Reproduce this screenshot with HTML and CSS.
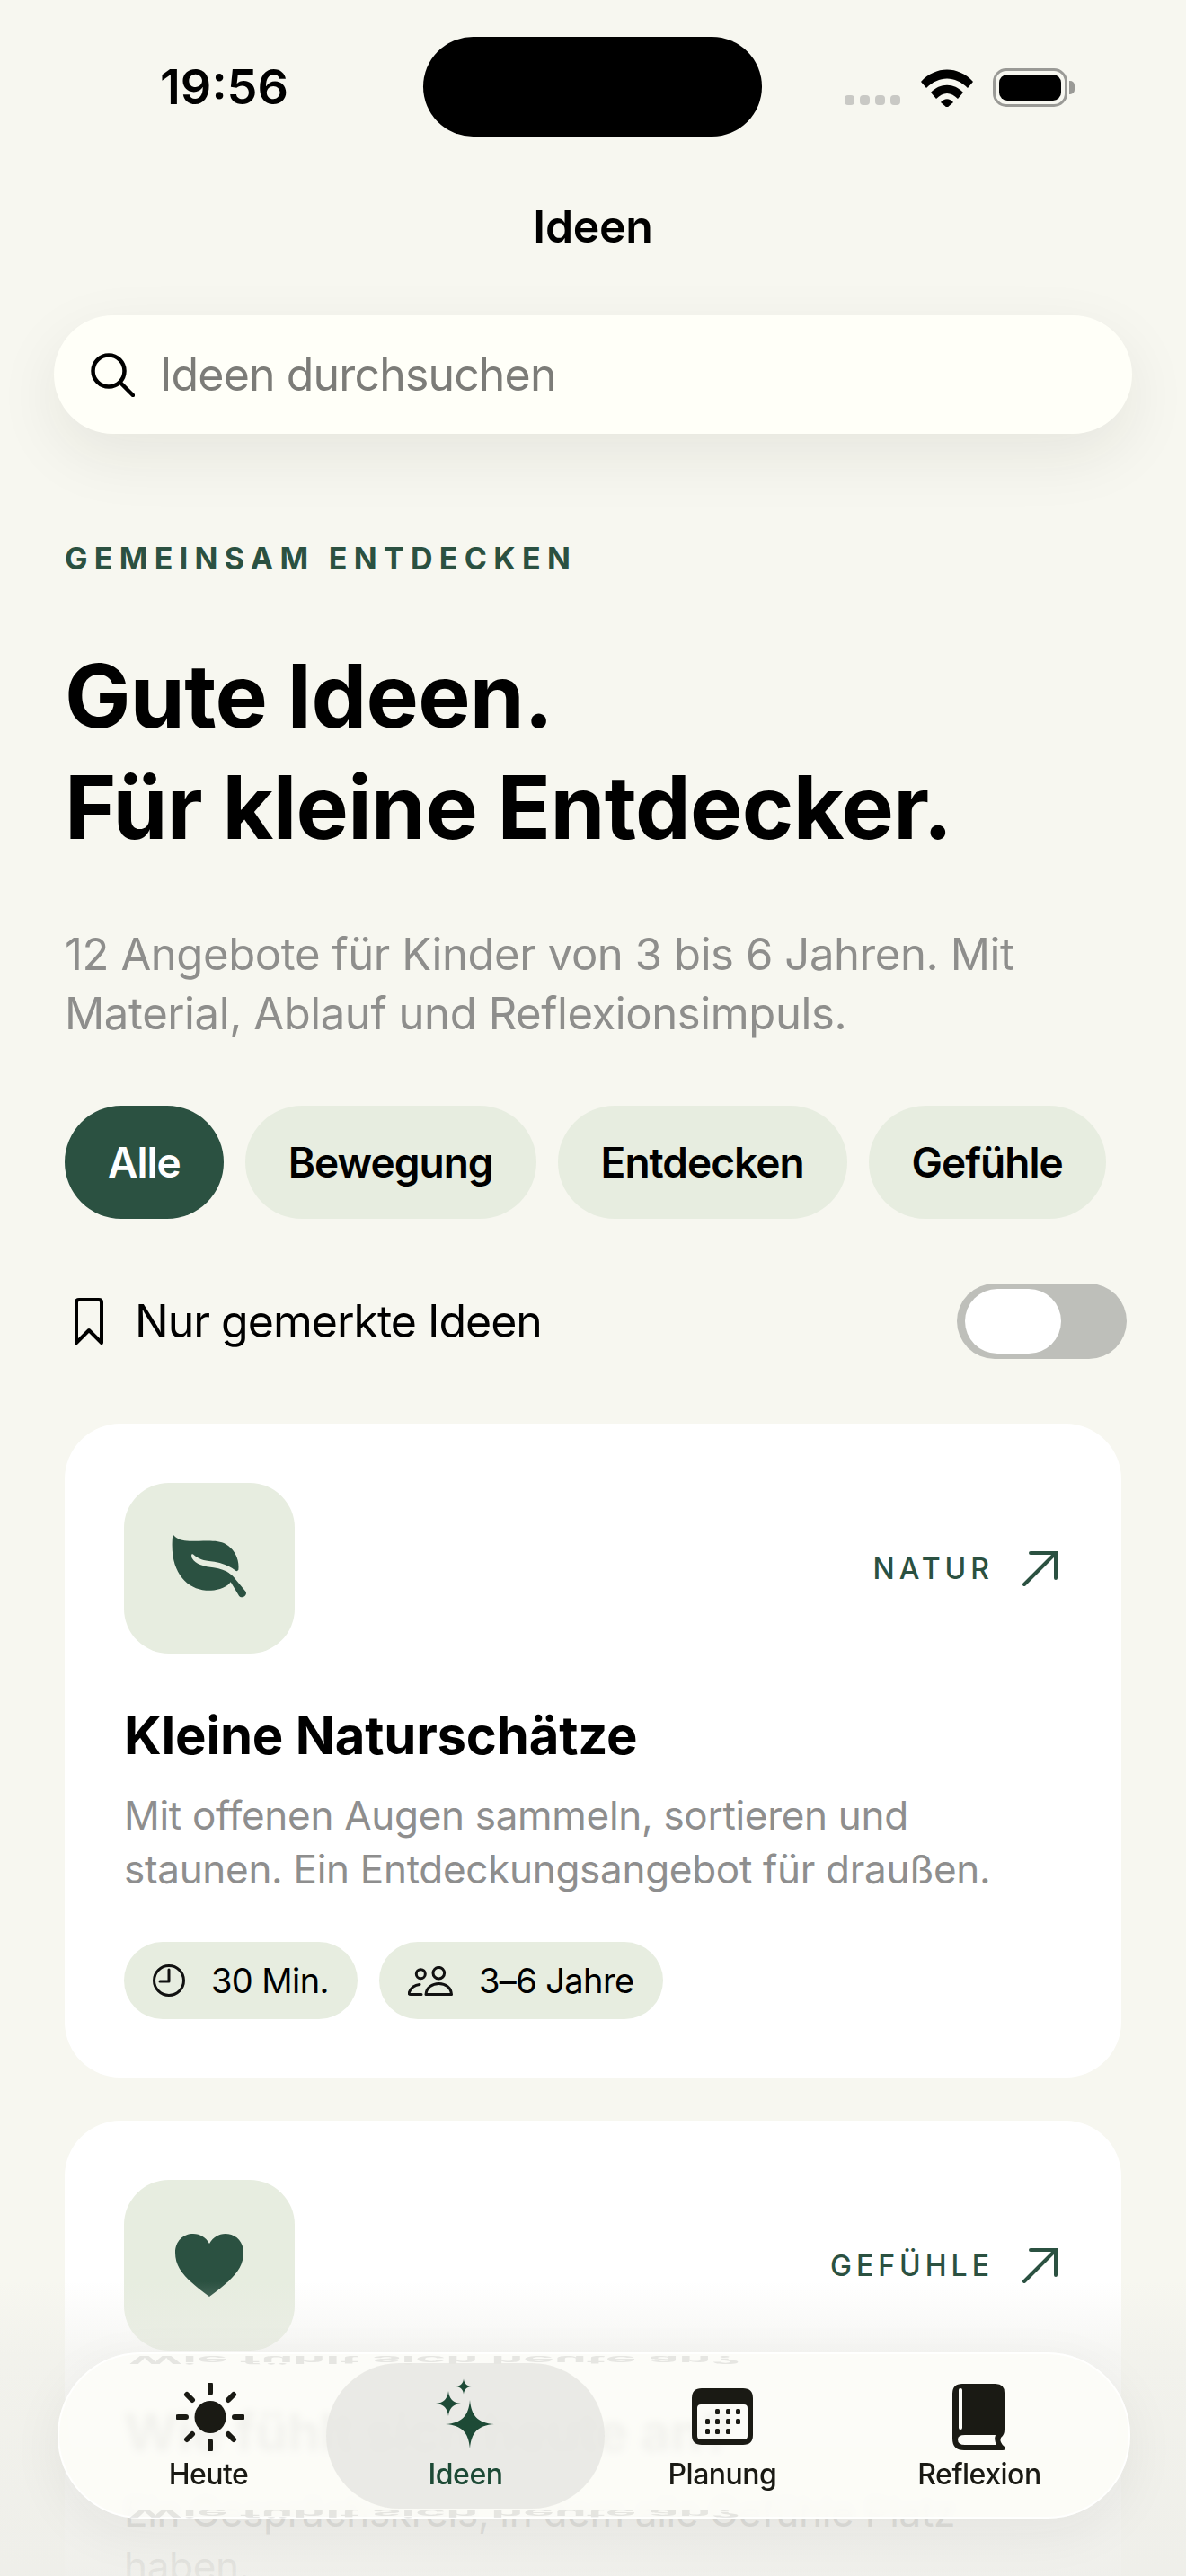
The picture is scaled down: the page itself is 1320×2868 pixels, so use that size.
FILE: index.html
```html
<!DOCTYPE html>
<html lang="de">

<head>
    <meta charset="UTF-8">
    <meta name="viewport" content="width=device-width, initial-scale=1.0">
    <title>Ideen</title>

    <link rel="stylesheet" href="styles.css">
</head>

<body>
    <div class="screen">
        <div class="status">
            <span class="status__time">19:56</span>
            <div class="status__island"></div>
            <div class="status__icons">
                <div class="status__signal"><i></i><i></i><i></i><i></i></div>
                <svg class="status__wifi" viewBox="0 0 58 42">
                    <path d="M0 14 C16 -4 42 -4 58 14 L52 21 C38 7 20 7 6 21 Z" />
                    <path d="M11 26 C21 15 37 15 47 26 L41 33 C33 25 25 25 17 33 Z" />
                    <path d="M22 37 C26 32 32 32 36 37 L29 43 Z" />
                </svg>
                <div class="status__battery"><div class="status__level"></div></div>
            </div>
        </div>

        <h2 class="nav-title">Ideen</h2>

        <div class="search">
            <svg class="search__icon" viewBox="0 0 49 49">
                <circle cx="20" cy="20" r="17.5" />
                <path d="M33 33 L47 47" />
            </svg>
            <span class="search__text">Ideen durchsuchen</span>
        </div>

        <main class="content">
            <p class="eyebrow">GEMEINSAM ENTDECKEN</p>
            <h1 class="hero">Gute Ideen.<br>Für kleine Entdecker.</h1>
            <p class="lead">12 Angebote für Kinder von 3 bis 6 Jahren. Mit<br>Material, Ablauf und Reflexionsimpuls.</p>

            <div class="filters">
                <span class="pill pill--active">Alle</span>
                <span class="pill">Bewegung</span>
                <span class="pill">Entdecken</span>
                <span class="pill">Gefühle</span>
            </div>

            <div class="saved">
                <svg class="saved__icon" viewBox="0 0 34 54">
                    <path d="M3 6 Q3 3 6 3 H28 Q31 3 31 6 V51 L17 37 L3 51 Z" />
                </svg>
                <span class="saved__label">Nur gemerkte Ideen</span>
                <div class="switch"><div class="switch__knob"></div></div>
            </div>

            <article class="card">
                <div class="card__top">
                    <div class="tile">
                        <svg class="tile__leaf" viewBox="-2 0 88 74">
                            <path class="leaf-body" d="M2.3 0.3 C6.7 5 11.7 6.7 20 6.7 C38 6.7 52 5 60 10 C70 15.7 75.7 26.7 74.3 39 Q73 40.5 71.7 40 C63 33 52 30 41.7 29 C33 28 28 25 24.3 21.7 C21.7 20 21.7 23 22.7 25.7 C26.7 33 36.7 35 46.7 36.3 C58 38 65.7 41.7 71.7 50 L82.7 63.3 C84.3 67.7 78 71.7 75 67.7 L65.7 52.3 C60 60 46.7 62.3 38.3 61.7 C16.7 60 -1 41.7 0.7 6.7 C0.7 2.3 1.7 0.3 2.3 0.3 Z" />
                        </svg>
                    </div>
                    <div class="tag">
                        <span class="tag__text">NATUR</span>
                        <svg class="tag__arrow" viewBox="0 0 40 40">
                            <path d="M2 38 L37 3 M9 3 H37 V31" />
                        </svg>
                    </div>
                </div>
                <h3 class="card__title">Kleine Naturschätze</h3>
                <p class="card__text">Mit offenen Augen sammeln, sortieren und<br>staunen. Ein Entdeckungsangebot für draußen.</p>
                <div class="chips">
                    <span class="chip">
                        <svg class="chip__clock" viewBox="0 0 36 36">
                            <circle cx="18" cy="18" r="16.5" />
                            <path d="M18 6 V19 H8" />
                        </svg>
                        30 Min.
                    </span>
                    <span class="chip">
                        <svg class="chip__people" viewBox="0 0 50 33">
                            <circle cx="14.3" cy="8.7" r="5" />
                            <circle cx="34.3" cy="7.7" r="6.3" />
                            <path d="M20 31.5 C20.5 24 27 19.5 34.5 19.5 C42 19.5 48 24 48.5 31.5 Z" />
                            <path d="M15 31.5 H3 Q0.5 31.5 1.5 29 C3.5 24 8 21 13 20.5" />
                        </svg>
                        3–6 Jahre
                    </span>
                </div>
            </article>

            <article class="card">
                <div class="card__top">
                    <div class="tile">
                        <svg class="tile__heart" viewBox="0 0 76 70">
                            <path class="leaf-body" d="M38 70 C14 52 0 40 0 21 C0 8 9 0 20 0 C28 0 34 4 38 11 C42 4 48 0 56 0 C67 0 76 8 76 21 C76 40 62 52 38 70 Z" />
                        </svg>
                    </div>
                    <div class="tag">
                        <span class="tag__text">GEFÜHLE</span>
                        <svg class="tag__arrow" viewBox="0 0 40 40">
                            <path d="M2 38 L37 3 M9 3 H37 V31" />
                        </svg>
                    </div>
                </div>
                <h3 class="card__title">Wie fühlt sich heute an?</h3>
                <p class="card__text">Ein Gesprächskreis, in dem alle Gefühle Platz<br>haben.</p>
            </article>
        </main>

        <div class="fade"></div>

        <nav class="tabbar">
            <div class="echo echo--top"><span>Wie fühlt sich heute an?</span></div>
            <div class="echo echo--bottom"><span>Wie fühlt sich heute an?</span></div>

            <div class="tab">
                <svg class="tab__icon tab__icon--sun" viewBox="0 0 76 76">
                    <ellipse cx="38" cy="38" rx="17.5" ry="18" class="fill-dark" />
                    <path class="sun-rays" d="M38 2 V11 M38 65 V74 M2 38 H11 M65 38 H74 M12 13 L18 19 M64 13 L58 19 M12 63 L18 57 M64 63 L58 57" />
                </svg>
                <span class="tab__label">Heute</span>
            </div>
            <div class="tab tab--active">
                <svg class="tab__icon tab__icon--spark" viewBox="0 0 76 88">
                    <path class="fill-green" d="M43 27 C44.5 45 52 52.5 70 54 C52 55.5 44.5 63 43 81 C41.5 63 34 55.5 16 54 C34 52.5 41.5 45 43 27 Z" />
                    <path class="fill-green" d="M19 17 C20 26 24 30 33 31 C24 32 20 36 19 45 C18 36 14 32 5 31 C14 30 18 26 19 17 Z" />
                    <path class="fill-green" d="M36 3.5 C36.6 8 39 11.4 44.5 12 C39 12.6 36.6 16 36 20.5 C35.4 16 33 12.6 27.5 12 C33 11.4 35.4 8 36 3.5 Z" />
                </svg>
                <span class="tab__label">Ideen</span>
            </div>
            <div class="tab">
                <svg class="tab__icon" viewBox="0 0 68 76">
                    <path class="fill-dark" fill-rule="evenodd" d="M11 6 H57 Q68 6 68 17 V58 Q68 69 57 69 H11 Q0 69 0 58 V17 Q0 6 11 6 Z M10 24 Q6 24 6 28 V59 Q6 63 10 63 H58 Q62 63 62 59 V28 Q62 24 58 24 Z" />
                    <g class="fill-dark">
                        <rect x="26" y="29" width="5" height="6" rx="1.5" /><rect x="38" y="29" width="5" height="6" rx="1.5" /><rect x="49" y="29" width="5" height="6" rx="1.5" />
                        <rect x="15" y="40" width="5" height="6" rx="1.5" /><rect x="26" y="40" width="5" height="6" rx="1.5" /><rect x="38" y="40" width="5" height="6" rx="1.5" /><rect x="49" y="40" width="5" height="6" rx="1.5" />
                        <rect x="15" y="51" width="5" height="6" rx="1.5" /><rect x="26" y="51" width="5" height="6" rx="1.5" /><rect x="38" y="51" width="5" height="6" rx="1.5" />
                    </g>
                </svg>
                <span class="tab__label">Planung</span>
            </div>
            <div class="tab">
                <svg class="tab__icon" viewBox="0 0 60 76">
                    <path class="fill-dark" fill-rule="evenodd" d="M11 1 H48 Q58 1 58 11 V52 Q58 58 54 61 Q52 66 58 71 Q60 75 56 75 H13 Q0 75 0 62 V12 Q0 1 11 1 Z M9 6 Q7 6 7 8 V50 Q7 52 9 52 Q11 52 11 50 V8 Q11 6 9 6 Z M14 58 Q6 58 6 63 Q6 69 14 69 H49 Q46 63 48 58 Z" />
                </svg>
                <span class="tab__label">Reflexion</span>
            </div>
        </nav>
    </div>
</body>

</html>
```

FILE: styles.css
```css
* {
    box-sizing: border-box;
}

body {
    margin: 0;
    background: #f7f7f0;
    font-family: 'Inter', 'Liberation Sans', sans-serif;
    color: #000;
}

.screen {
    position: relative;
    width: 1320px;
    height: 2868px;
    overflow: hidden;
}

/* status bar */
.status {
    display: flex;
    align-items: center;
    height: 111px;
    margin-top: 41px;
    padding-left: 178px;
}

.status__time {
    width: 293px;
    font-size: 54px;
    font-weight: 600;
}

.status__island {
    width: 377px;
    height: 111px;
    border-radius: 56px;
    background: #000;
}

.status__icons {
    display: flex;
    align-items: flex-end;
    height: 44px;
    margin-left: 92px;
}

.status__signal {
    display: flex;
    gap: 6px;
    margin-right: 23px;
    margin-bottom: 2px;
}

.status__signal i {
    width: 11px;
    height: 11px;
    border-radius: 4px;
    background: #c9c9c5;
}

.status__wifi {
    width: 58px;
    height: 42px;
    margin-right: 22px;
}

.status__battery {
    position: relative;
    width: 83px;
    height: 43px;
    border: 3px solid #9a9a96;
    border-radius: 15px;
    padding: 4px;
}

.status__battery:after {
    content: "";
    position: absolute;
    top: 11px;
    right: -11px;
    width: 6px;
    height: 15px;
    border-radius: 0 5px 5px 0;
    background: #9a9a96;
}

.status__level {
    height: 100%;
    border-radius: 9px;
    background: #000;
}

/* nav + search */
.nav-title {
    margin: 70px 0 0;
    font-size: 50px;
    font-weight: 600;
    line-height: 60px;
    letter-spacing: -0.3px;
    text-align: center;
}

.search {
    display: flex;
    align-items: center;
    gap: 28px;
    height: 132px;
    margin: 69px 60px 0;
    padding-left: 41px;
    border-radius: 66px;
    background: #fffff8;
    box-shadow: 0 24px 70px rgba(40, 40, 30, 0.08);
}

.search__icon {
    width: 49px;
    height: 49px;
    fill: none;
    stroke: #000;
    stroke-width: 4.5;
    stroke-linecap: round;
}

.search__text {
    font-size: 50px;
    letter-spacing: -0.85px;
    color: #7c7c78;
}

/* page content */
.content {
    padding: 0 72px;
}

.eyebrow {
    margin: 119px 0 0;
    font-size: 34px;
    font-weight: 700;
    line-height: 40px;
    letter-spacing: 7.3px;
    color: #2b5141;
}

.hero {
    margin: 71px 0 0;
    font-size: 98px;
    font-weight: 700;
    line-height: 124px;
    letter-spacing: -0.7px;
}

.lead {
    margin: 69px 0 0;
    font-size: 49px;
    line-height: 66px;
    letter-spacing: -0.4px;
    color: #8e8e8c;
}

.filters {
    display: flex;
    gap: 24px;
    margin-top: 69px;
}

.pill {
    display: flex;
    align-items: center;
    height: 126px;
    padding: 0 48px;
    border-radius: 63px;
    background: #e7ede0;
    font-size: 46px;
    font-weight: 600;
    letter-spacing: -1px;
}

.pill--active {
    background: #2b5141;
    color: #fff;
}

.saved {
    display: flex;
    align-items: center;
    height: 84px;
    margin-top: 72px;
}

.saved__icon {
    width: 34px;
    height: 54px;
    margin-left: 10px;
    fill: none;
    stroke: #000;
    stroke-width: 4;
    stroke-linejoin: round;
}

.saved__label {
    margin-left: 34px;
    font-size: 50px;
    letter-spacing: -1px;
}

.switch {
    width: 189px;
    height: 84px;
    margin-left: auto;
    margin-right: -6px;
    padding: 6px 9px;
    border-radius: 42px;
    background: #bebfba;
}

.switch__knob {
    width: 107px;
    height: 72px;
    border-radius: 36px;
    background: #fff;
}

/* cards */
.card {
    height: 728px;
    margin-top: 72px;
    padding: 66px;
    border-radius: 62px;
    background: #fff;
}

.card + .card {
    margin-top: 48px;
}

.card__top {
    display: flex;
    align-items: center;
    justify-content: space-between;
}

.tile {
    display: flex;
    align-items: center;
    justify-content: center;
    width: 190px;
    height: 190px;
    border-radius: 50px;
    background: #e7ede0;
}

.tile__leaf {
    width: 88px;
    height: 74px;
}

.tile__heart {
    width: 76px;
    height: 70px;
}

.leaf-body {
    fill: #2b5141;
}

.tag {
    display: flex;
    align-items: center;
    gap: 32px;
    margin-right: 4px;
}

.tag__text {
    font-size: 32px;
    font-weight: 500;
    letter-spacing: 5px;
    color: #2b5141;
}

.tag__arrow {
    width: 40px;
    height: 40px;
    fill: none;
    stroke: #2b5141;
    stroke-width: 4;
    stroke-linecap: round;
}

.card__title {
    margin: 56px 0 0;
    font-size: 58px;
    font-weight: 700;
    line-height: 70px;
    letter-spacing: -0.2px;
}

.card__text {
    margin: 24px 0 0;
    font-size: 44px;
    line-height: 60px;
    letter-spacing: -0.3px;
    color: #8e8e8e;
}

.chips {
    display: flex;
    gap: 24px;
    margin-top: 51px;
}

.chip {
    display: flex;
    align-items: center;
    gap: 29px;
    height: 86px;
    padding: 0 32px;
    border-radius: 43px;
    background: #e7ede0;
    font-size: 38px;
    letter-spacing: -0.6px;
}

.chip__clock {
    width: 36px;
    height: 36px;
}

.chip__people {
    width: 50px;
    height: 33px;
}

.chip svg {
    fill: none;
    stroke: #111;
    stroke-width: 3;
    stroke-linecap: round;
    stroke-linejoin: round;
}

/* bottom fade over the list */
.fade {
    position: absolute;
    left: 0;
    right: 0;
    bottom: 0;
    height: 328px;
    background: linear-gradient(to bottom, rgba(238, 238, 233, 0), rgba(238, 238, 233, 0.55) 25%, rgba(238, 238, 233, 0.82) 82%, rgba(238, 238, 233, 0.9));
}

/* tab bar */
.tabbar {
    position: absolute;
    left: 64px;
    top: 2619px;
    display: flex;
    width: 1194px;
    height: 185px;
    padding: 0 23px;
    border: 2px solid rgba(255, 255, 255, 0.8);
    border-radius: 92px;
    background: rgba(253, 253, 248, 0.88);
    -webkit-backdrop-filter: blur(4px);
    backdrop-filter: blur(4px);
    box-shadow: 0 16px 60px rgba(40, 40, 30, 0.06);
}

/* squashed mirror of the title on the glass edge */
.echo {
    position: absolute;
    left: 77px;
    width: 680px;
    height: 12px;
    font-size: 58px;
    font-weight: 700;
    line-height: 12px;
    color: rgba(0, 0, 0, 0.09);
    filter: blur(0.6px);
}

.echo span {
    display: block;
    white-space: nowrap;
    transform: scaleY(-0.2);
}

.echo--top {
    top: 0;
}

.echo--bottom {
    bottom: -2px;
}

.tab {
    position: relative;
    flex: 1;
    height: 100%;
}

.tab--active:before {
    content: "";
    position: absolute;
    left: -12px;
    right: -12px;
    top: 10px;
    bottom: 9px;
    border-radius: 81px;
    background: rgba(230, 230, 226, 0.82);
}

.tab__icon {
    position: absolute;
    left: 50%;
    top: 32px;
    width: 76px;
    height: 76px;
    transform: translateX(-50%);
}

.tab__icon--sun {
    margin-left: 2px;
}

.tab__icon--spark {
    top: 24px;
    height: 88px;
}

.tab__label {
    position: absolute;
    left: 0;
    right: 0;
    top: 114px;
    font-size: 32px;
    font-weight: 500;
    line-height: 40px;
    letter-spacing: -0.5px;
    text-align: center;
    color: #1a1a14;
}

.tab--active .tab__label {
    color: #1d4a36;
}

.fill-dark {
    fill: #1a1a14;
}

.fill-green {
    fill: #1d4a36;
}

.sun-rays {
    fill: none;
    stroke: #1a1a14;
    stroke-width: 6;
    stroke-linecap: round;
}
```
